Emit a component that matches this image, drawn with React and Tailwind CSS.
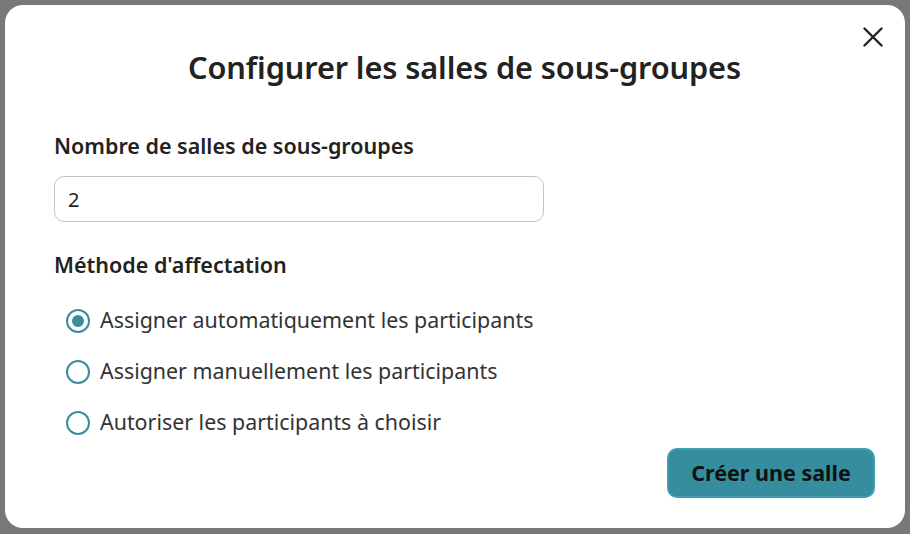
import { useState } from "react";

const options = [
  { id: "auto", label: "Assigner automatiquement les participants" },
  { id: "manual", label: "Assigner manuellement les participants" },
  { id: "choose", label: "Autoriser les participants à choisir" },
];

function Radio({ checked }) {
  return (
    <span className="flex h-[24px] w-[24px] shrink-0 items-center justify-center rounded-full border-[2.5px] border-[#3a8d9c] bg-white">
      {checked && <span className="h-[12px] w-[12px] rounded-full bg-[#3a8d9c]" />}
    </span>
  );
}

export default function App() {
  const [count, setCount] = useState("2");
  const [method, setMethod] = useState("auto");

  return (
    <div className="h-[534px] w-full bg-[#787878] px-[5px] pb-[6px] pt-[5px] font-['Noto_Sans',sans-serif] text-[#222]">
      <div className="relative flex h-full flex-col rounded-[18px] bg-white pl-[49px] pr-[30px] pt-[42px] pb-[30px]">
        <button className="absolute right-[18px] top-[18px] flex h-[28px] w-[28px] items-center justify-center text-[#222]">
          <svg width="20" height="20" viewBox="0 0 20 20" fill="none" stroke="currentColor" strokeWidth="2.4" strokeLinecap="round">
            <path d="M1.5 1.5l17 17M18.5 1.5l-17 17" />
          </svg>
        </button>

        <h2 className="text-center text-[30.7px] font-semibold leading-[40px] tracking-[-0.1px]">
          Configurer les salles de sous-groupes
        </h2>

        <label className="mt-[45px] text-[21.5px] font-semibold leading-[28px]">Nombre de salles de sous-groupes</label>
        <input
          value={count}
          onChange={(e) => setCount(e.target.value)}
          className="mt-[16px] h-[47px] w-[490px] rounded-[10px] border border-[#c4c4c4] px-[13px] text-[20px] text-[#222] outline-none"
        />

        <div className="mt-[29px] text-[21.5px] font-semibold leading-[28px]">Méthode d'affectation</div>

        <div className="mt-[16px] flex flex-col pl-[12px]">
          {options.map((o) => (
            <label
              key={o.id}
              onClick={() => setMethod(o.id)}
              className="flex h-[51px] cursor-pointer items-center gap-[10px] text-[21.4px] text-[#333]"
            >
              <Radio checked={method === o.id} />
              <span>{o.label}</span>
            </label>
          ))}
        </div>

        <div className="flex justify-end">
          <button className="h-[50px] w-[208px] rounded-[10px] border-2 border-[#3d9fb0] bg-[#358d9d] text-[21.5px] font-bold text-[#111]">
            Créer une salle
          </button>
        </div>
      </div>
    </div>
  );
}
